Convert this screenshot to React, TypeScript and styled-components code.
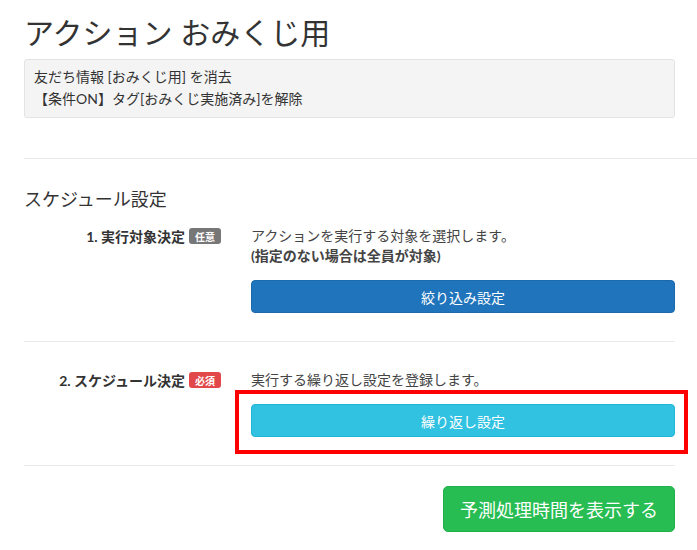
import React from "react";
import styled, { createGlobalStyle } from "styled-components";

const Global = createGlobalStyle`
  html, body { margin: 0; padding: 0; background: #fff; }
  body {
    font-family: "Lato", "Noto Sans CJK JP", sans-serif;
    color: #333;
    font-size: 14px;
    overflow: hidden;
  }
`;

const Page = styled.div`
  padding: 0 22px 0 24px;
  width: 697px;
  box-sizing: border-box;
`;

const Title = styled.h1`
  margin: 16px 0 10px;
  font-size: 30px;
  line-height: 33px;
  font-weight: 400;
  color: #333;
`;

const Well = styled.div`
  background: #f4f4f4;
  border: 1px solid #e3e3e3;
  border-radius: 3px;
  padding: 6px 9px 7px;
  font-size: 14px;
  line-height: 22px;
  color: #333;
`;

const Rule = styled.hr<{ $bleed?: boolean }>`
  border: 0;
  border-top: 1px solid #eaeaea;
  margin: 0 ${(p) => (p.$bleed ? "-22px" : "0")} 0 0;
  height: 0;
`;

const Spacer = styled.div<{ $h: number }>`
  height: ${(p) => p.$h}px;
`;

const SectionTitle = styled.h2`
  margin: 27px 0 14px;
  font-size: 18px;
  line-height: 26px;
  font-weight: 400;
  color: #333;
`;

const Row = styled.div<{ $first?: boolean }>`
  display: grid;
  grid-template-columns: 212px 1fr;
  padding: ${(p) => (p.$first ? "0" : "28px")} 0 28px;
`;

const Label = styled.div`
  display: flex;
  justify-content: flex-end;
  align-items: center;
  gap: 4px;
  padding-right: 15px;
  height: 20px;
  font-weight: 700;
  font-size: 14px;
  color: #333;
`;

const Badge = styled.span<{ $tone: "gray" | "red" }>`
  display: inline-flex;
  align-items: center;
  justify-content: center;
  height: 16px;
  padding: 0 6px;
  border-radius: 3px;
  font-size: 10px;
  font-weight: 700;
  color: #fff;
  background: ${(p) => (p.$tone === "red" ? "#e2474a" : "#777")};
`;

const Content = styled.div`
  padding-left: 15px;
  display: flex;
  flex-direction: column;
`;

const Desc = styled.div<{ $bold?: boolean }>`
  font-size: 14px;
  line-height: 20px;
  color: #444;
  font-weight: ${(p) => (p.$bold ? 700 : 400)};
`;

const Action = styled.button<{ $tone: "blue" | "cyan" }>`
  margin-top: 14px;
  height: 33px;
  width: 100%;
  border-radius: 4px;
  border: 1px solid ${(p) => (p.$tone === "blue" ? "#1a6aad" : "#1fb5d8")};
  background: ${(p) => (p.$tone === "blue" ? "#1f74bb" : "#31c1e1")};
  color: #fff;
  font-family: inherit;
  font-size: 14px;
  font-weight: 400;
  cursor: pointer;
`;

const Highlight = styled.div`
  position: relative;
`;

const RedFrame = styled.div`
  position: absolute;
  left: -16px;
  right: -13px;
  top: 0px;
  bottom: -17px;
  border: 4px solid #f00;
  pointer-events: none;
`;

const Footer = styled.div`
  display: flex;
  justify-content: flex-end;
  padding-top: 20px;
`;

const Predict = styled.button`
  height: 46px;
  width: 232px;
  border: 1px solid #22b04a;
  border-radius: 5px;
  background: #27bd52;
  color: #fff;
  font-family: inherit;
  font-size: 18px;
  cursor: pointer;
`;

export default function App() {
  return (
    <>
      <Global />
      <Page>
        <Title>アクション おみくじ用</Title>
        <Well>
          友だち情報 [おみくじ用] を消去
          <br />
          【条件ON】タグ[おみくじ実施済み]を解除
        </Well>
        <Spacer $h={40} />
        <Rule $bleed />
        <SectionTitle>スケジュール設定</SectionTitle>
        <Row $first>
          <Label>
            1. 実行対象決定<Badge $tone="gray">任意</Badge>
          </Label>
          <Content>
            <Desc>アクションを実行する対象を選択します。</Desc>
            <Desc $bold>(指定のない場合は全員が対象)</Desc>
            <Action $tone="blue">絞り込み設定</Action>
          </Content>
        </Row>
        <Rule />
        <Row>
          <Label>
            2. スケジュール決定<Badge $tone="red">必須</Badge>
          </Label>
          <Content>
            <Desc>実行する繰り返し設定を登録します。</Desc>
            <Highlight>
              <Action $tone="cyan">繰り返し設定</Action>
              <RedFrame />
            </Highlight>
          </Content>
        </Row>
        <Rule />
        <Footer>
          <Predict>予測処理時間を表示する</Predict>
        </Footer>
      </Page>
    </>
  );
}
